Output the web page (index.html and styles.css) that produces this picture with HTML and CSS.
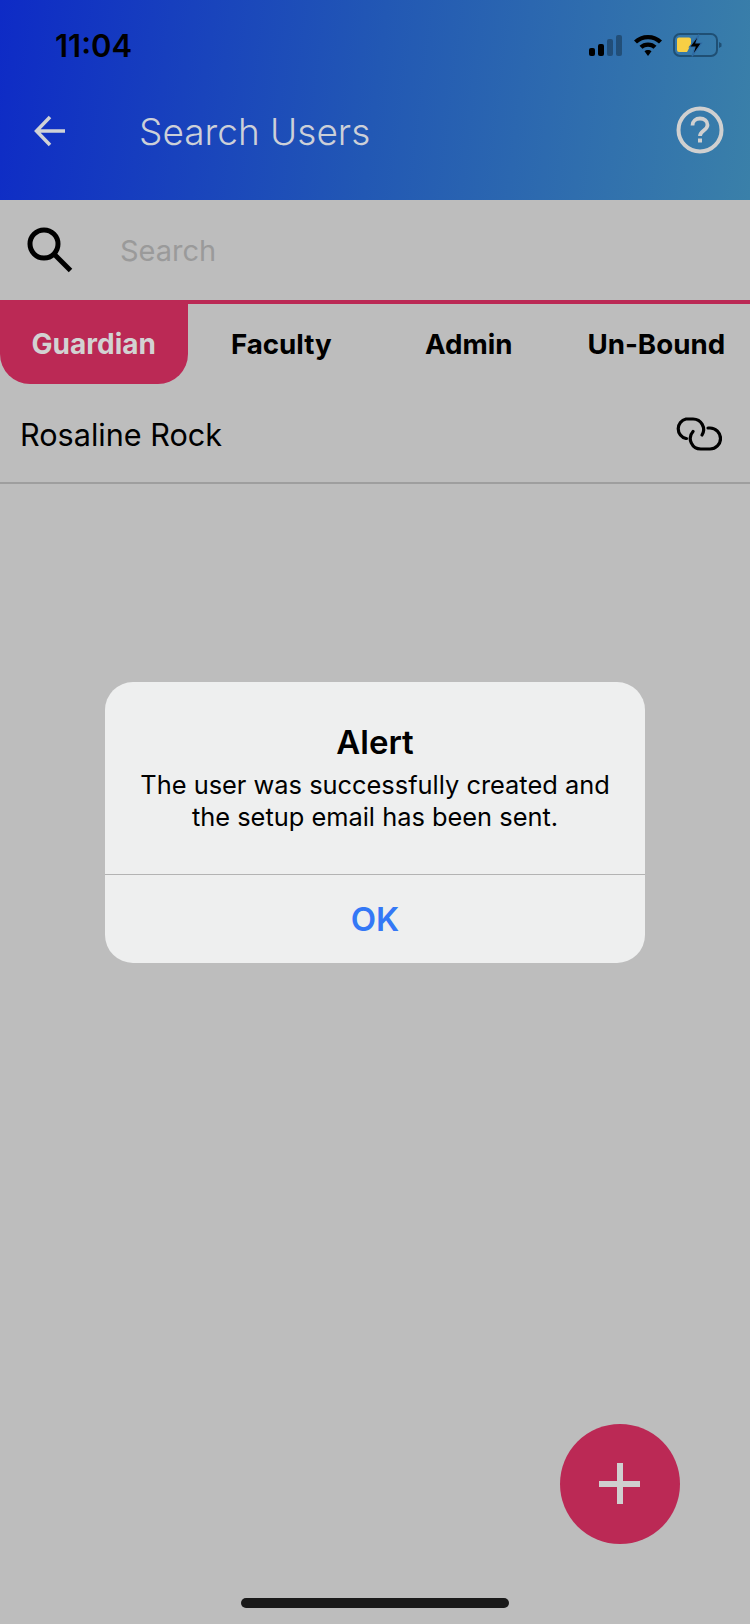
FILE: index.html
```html
<!DOCTYPE html>
<html lang="en">
<head>
    <meta charset="UTF-8">
    <meta name="viewport" content="width=device-width, initial-scale=1.0">
    <title>Search Users</title>
    <link rel="stylesheet" href="styles.css">
</head>
<body>

<div class="screen">
    <!-- Header -->
    <div class="header">
        <div class="status">
            <span class="time">11:04</span>
            <div class="status-icons">
                <svg class="signal" width="34" height="24" viewBox="0 0 34 24">
                    <rect x="0" y="15" width="6" height="8" rx="2" fill="#000"/>
                    <rect x="9" y="11" width="6" height="12" rx="2" fill="#000"/>
                    <rect x="18" y="6" width="6" height="17" rx="2" fill="#000" fill-opacity=".3"/>
                    <rect x="27" y="2" width="6" height="21" rx="2" fill="#000" fill-opacity=".3"/>
                </svg>
                <svg class="wifi" width="30" height="24" viewBox="0 0 30 24">
                    <path d="M15 2C9.5 2 4.500 4 1 7.500l3 3C7 7.800 10.800 6.300 15 6.300s8 1.500 11 4.200l3-3C25.500 4 20.500 2 15 2z" fill="#000"/>
                    <path d="M15 9.500c-3.300 0-6.300 1.200-8.500 3.300l3 3c1.500-1.300 3.400-2.100 5.500-2.100s4 .8 5.500 2.100l3-3c-2.200-2.100-5.200-3.300-8.500-3.300z" fill="#000"/>
                    <path d="M15 17c-1.400 0-2.600.5-3.500 1.300L15 23l3.500-4.700c-.9-.8-2.100-1.300-3.500-1.300z" fill="#000"/>
                </svg>
                <svg class="battery" width="49" height="24" viewBox="0 0 49 24">
                    <rect x="1" y="1" width="43" height="22" rx="6" fill="none" stroke="#1f4f74" stroke-width="2"/>
                    <path d="M46 9l2.500 1.500v3L46 15z" fill="#1f4f74"/>
                    <path d="M6 4.500h10a2 2 0 0 1 2 2v5l-4 7.500H6a2 2 0 0 1-2-2V6.500a2 2 0 0 1 2-2z" fill="#f7cf45"/>
                    <path d="M26 1.500L16.500 14h5.500l-3 9.500L28.500 10H23z" fill="#000" stroke="#2f6ca6" stroke-width="1.200"/>
                </svg>
            </div>
        </div>
        <div class="nav">
            <svg class="back" width="32" height="32" viewBox="0 0 32 32">
                <path d="M31 16H3M16 2L2.500 16L16 30" fill="none" stroke="#d0d2d6" stroke-width="3.500"/>
            </svg>
            <span class="nav-title">Search Users</span>
            <svg class="help" width="48" height="48" viewBox="0 0 48 48">
                <circle cx="24" cy="24" r="21.500" fill="none" stroke="#d0d0d0" stroke-width="4"/>
                <path d="M16.500 19.500c0-4.500 3.300-7 7.500-7s7.500 2.600 7.500 6.500c0 5.500-7.500 5.500-7.500 11" fill="none" stroke="#d0d0d0" stroke-width="3.800"/>
                <rect x="22" y="32.500" width="4" height="4" fill="#d0d0d0"/>
            </svg>
        </div>
    </div>

    <!-- Search -->
    <div class="search">
        <svg class="search-icon" width="46" height="46" viewBox="0 0 46 46">
            <circle cx="17" cy="17" r="14" fill="none" stroke="#000" stroke-width="5"/>
            <path d="M27.500 27.500L43.500 43.500" fill="none" stroke="#000" stroke-width="5"/>
        </svg>
        <span class="search-text">Search</span>
    </div>

    <!-- Tabs -->
    <div class="tabs">
        <div class="tab active">Guardian</div>
        <div class="tab">Faculty</div>
        <div class="tab">Admin</div>
        <div class="tab">Un-Bound</div>
    </div>

    <div class="row">
        <span class="row-name">Rosaline Rock</span>
        <svg class="link" width="48" height="34" viewBox="0 0 48 34">
            <path d="M12.500 21.500H12A10 10 0 0 1 12 2H19A10.500 10.500 0 0 1 28 18" fill="none" stroke="#000" stroke-width="3.200" stroke-linecap="round"/>
            <path d="M34 11H36A10.500 10.500 0 0 1 36 32H27A10.500 10.500 0 0 1 19 14.500" fill="none" stroke="#000" stroke-width="3.200" stroke-linecap="round"/>
        </svg>
    </div>

    <div class="fab-row">
        <div class="fab"><span class="fab-h"></span><span class="fab-v"></span></div>
    </div>

    <div class="home-bar"></div>

    <!-- Alert -->
    <div class="scrim">
        <div class="alert">
            <div class="alert-body">
                <div class="alert-title">Alert</div>
                <div class="alert-msg">The user was successfully created and the setup email has been sent.</div>
            </div>
            <div class="alert-btn">OK</div>
        </div>
    </div>
</div>

</body>
</html>
```

FILE: styles.css
```css
* {
    box-sizing: border-box;
}
body {
    font-family: Inter, "Liberation Sans", sans-serif;
    margin: 0;
    padding: 0;
    background: #bdbdbd;
}
.screen {
    position: relative;
    width: 750px;
    height: 1624px;
    overflow: hidden;
    display: flex;
    flex-direction: column;
    background: #bdbdbd;
}
.header {
    height: 200px;
    background: linear-gradient(97deg, #0e2bc6 0%, #2258b4 50%, #3a80a9 100%);
}
.status {
    height: 74px;
    padding: 29px 28px 0 55px;
    display: flex;
    justify-content: space-between;
    align-items: flex-start;
}
.time {
    font-size: 31px;
    line-height: 34px;
    font-weight: 600;
    color: #000;
}
.status-icons {
    display: flex;
    align-items: center;
    gap: 10px;
    padding-top: 4px;
}
.nav {
    height: 112px;
    padding: 0 26px 0 34px;
    display: flex;
    align-items: center;
}
.back {
    margin-top: 2px;
}
.nav-title {
    flex: 1;
    margin: 2px 0 0 73px;
    font-size: 37px;
    font-weight: 300;
    color: #ccd0d8;
}
.search {
    height: 100px;
    padding: 0 0 0 27px;
    display: flex;
    align-items: center;
    gap: 47px;
}
.search-text {
    font-size: 29px;
    color: #9a9a9a;
}
.tabs {
    height: 84px;
    border-top: 4px solid #bb2955;
    display: flex;
}
.tab {
    flex: 1;
    display: flex;
    align-items: center;
    justify-content: center;
    font-size: 27.7px;
    font-weight: 700;
    color: #000;
}
.tab.active {
    background: #bb2955;
    color: #d2d2d2;
    font-size: 28px;
    border-radius: 0 0 30px 30px;
}
.row {
    height: 100px;
    padding: 2px 28px 0 20px;
    border-bottom: 2px solid #9e9e9e;
    display: flex;
    align-items: center;
    justify-content: space-between;
}
.row-name {
    font-size: 30.6px;
    color: #000;
}
.fab-row {
    flex: 1;
    padding: 940px 70px 0 0;
    display: flex;
    justify-content: flex-end;
}
.fab {
    position: relative;
    width: 120px;
    height: 120px;
    border-radius: 50%;
    background: #bb2955;
}
.fab-h, .fab-v {
    position: absolute;
    background: #cfcfcf;
}
.fab-h {
    left: 39px;
    top: 57px;
    width: 41px;
    height: 6px;
}
.fab-v {
    left: 57px;
    top: 39px;
    width: 6px;
    height: 41px;
}
.home-bar {
    position: absolute;
    left: 241px;
    bottom: 16px;
    width: 268px;
    height: 10px;
    border-radius: 5px;
    background: #1a1a1a;
}
.scrim {
    position: absolute;
    inset: 0;
    padding-top: 682px;
    display: flex;
    justify-content: center;
    align-items: flex-start;
}
.alert {
    width: 540px;
    height: 281px;
    border-radius: 28px;
    background: #eeefef;
    display: flex;
    flex-direction: column;
}
.alert-body {
    flex: 1;
    padding: 38px 30px 0;
    text-align: center;
    color: #000;
}
.alert-title {
    font-size: 33px;
    line-height: 44px;
    font-weight: 600;
    margin-bottom: 5px;
}
.alert-msg {
    font-size: 25.4px;
    line-height: 32px;
}
.alert-btn {
    height: 89px;
    border-top: 1px solid #b3b3b3;
    display: flex;
    align-items: center;
    justify-content: center;
    font-size: 33px;
    font-weight: 600;
    color: #3478f6;
}
```
